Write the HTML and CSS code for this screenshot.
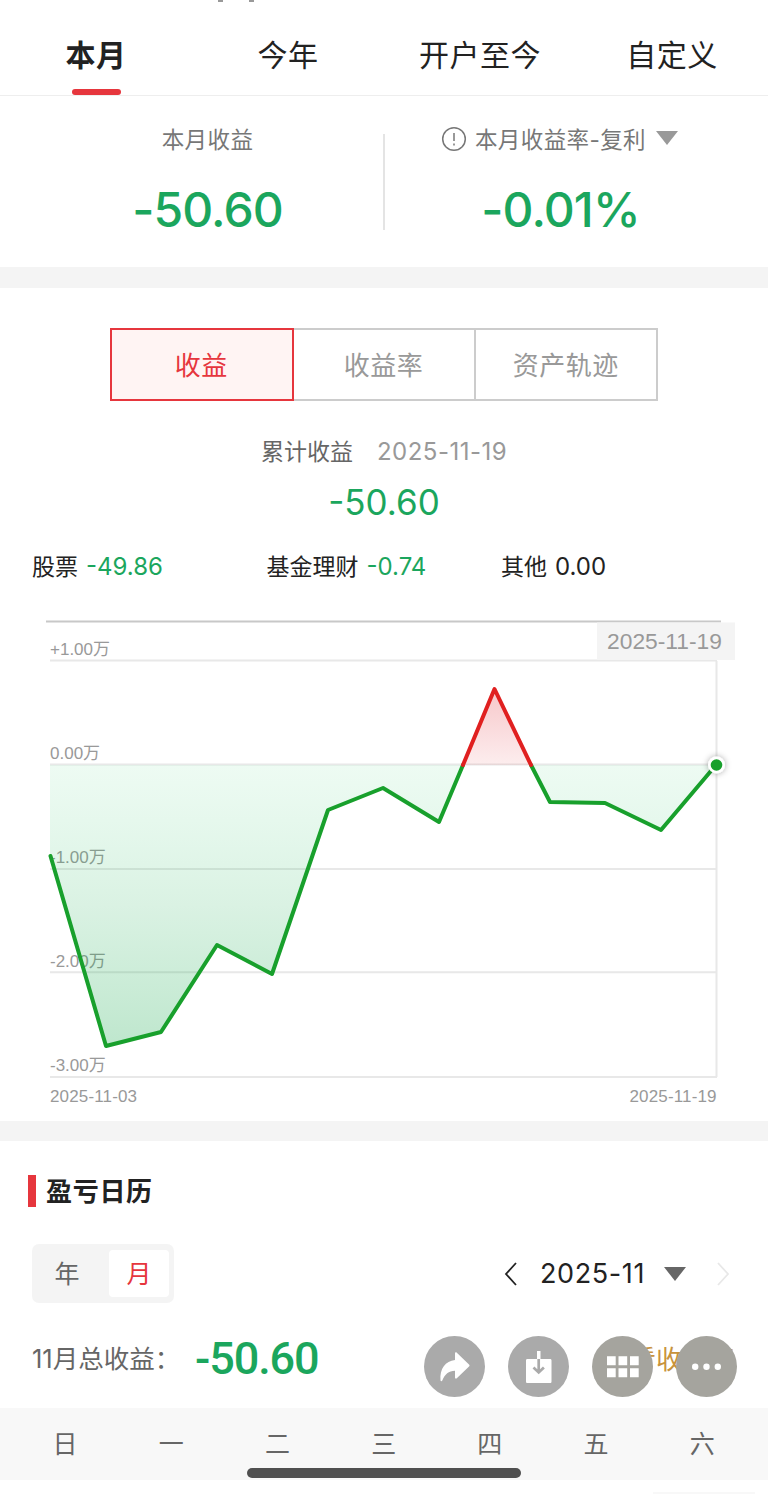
FILE: index.html
```
<!DOCTYPE html>
<html lang="zh-CN">
<head>
    <meta charset="UTF-8">
    <meta name="viewport" content="width=device-width, initial-scale=1.0">
    <title>收益分析</title>
    <link rel="stylesheet" href="styles.css">
</head>
<body>
    <div class="page">
        <div class="top-bar"><i></i><i></i></div>
        <nav class="tabs">
            <a class="tab active">本月</a>
            <a class="tab">今年</a>
            <a class="tab">开户至今</a>
            <a class="tab">自定义</a>
        </nav>

        <section class="summary">
            <div class="summary-item first">
                <div class="summary-label"><span>本月收益</span></div>
                <div class="summary-value">-50.60</div>
            </div>
            <div class="divider"></div>
            <div class="summary-item second">
                <div class="summary-label">
                    <svg class="info" viewBox="0 0 26 26"><circle cx="13" cy="13" r="11.3"/><path d="M13 7v8"/><path d="M13 17.5v2"/></svg>
                    <span>本月收益率-复利</span>
                    <svg class="caret" viewBox="0 0 22 14"><path d="M0 0h22L11 14z"/></svg>
                </div>
                <div class="summary-value">-0.01%</div>
            </div>
        </section>

        <section class="trend">
            <div class="segments">
                <button class="segment active">收益</button>
                <button class="segment">收益率</button>
                <button class="segment">资产轨迹</button>
            </div>
            <div class="total-label"><span>累计收益</span><span class="total-date">2025-11-19</span></div>
            <div class="total-value">-50.60</div>
            <div class="breakdown">
                <div>股票<span class="amount green">-49.86</span></div>
                <div>基金理财<span class="amount green">-0.74</span></div>
                <div>其他<span class="amount">0.00</span></div>
            </div>
            <svg class="chart" viewBox="0 0 768 490" width="768" height="490">
                <defs>
                    <linearGradient id="lossFill" gradientUnits="userSpaceOnUse" x1="0" y1="149" x2="0" y2="430">
                        <stop offset="0" stop-color="#22cc66" stop-opacity="0.08"/>
                        <stop offset="0.5" stop-color="#18ad50" stop-opacity="0.16"/>
                        <stop offset="1" stop-color="#10a547" stop-opacity="0.27"/>
                    </linearGradient>
                    <linearGradient id="gainFill" gradientUnits="userSpaceOnUse" x1="0" y1="73" x2="0" y2="149">
                        <stop offset="0" stop-color="#e0202a" stop-opacity="0.25"/>
                        <stop offset="1" stop-color="#e0202a" stop-opacity="0.08"/>
                    </linearGradient>
                    <filter id="dotShadow" x="-50%" y="-50%" width="200%" height="200%">
                        <feDropShadow dx="0" dy="0" stdDeviation="3" flood-opacity="0.35"/>
                    </filter>
                </defs>
                <path class="top-line" d="M46 5.500H721"/>
                <path class="grid" d="M50 44.500H717M50 148.500H717M50 253H717M50 356.200H717M50 461H717M716.500 45V461"/>
                <g class="axis">
                    <text x="50" y="39">+1.00万</text>
                    <text x="50" y="143">0.00万</text>
                    <text x="50" y="247">-1.00万</text>
                    <text x="50" y="351">-2.00万</text>
                    <text x="50" y="455">-3.00万</text>
                    <text x="50" y="486" textLength="87">2025-11-03</text>
                    <text x="629.500" y="486" textLength="87">2025-11-19</text>
                </g>
                <path fill="url(#lossFill)" d="M50 149V240L106 430L161 416L217 329L272 358L328 194L383 172L439 206L463 149zM531 149L550 186L605 187L661 214L716 149z"/>
                <path fill="url(#gainFill)" d="M463 149L494.500 73L531 149z"/>
                <path class="line" d="M50.500 240L106 430L161 416L217 329L272 358L328 194L383 172L439 206L463 149"/>
                <path class="line" d="M531 149L550 186L605 187L661 214L716 149"/>
                <path class="line gain" d="M463 149L494.500 73L531 149"/>
                <circle cx="716.500" cy="149" r="8.500" fill="#fff" filter="url(#dotShadow)"/>
                <circle cx="716.500" cy="149" r="5.800" fill="#18a02c"/>
                <rect x="597" y="6.500" width="138" height="37.500" fill="#f4f4f4"/>
                <text class="marker-text" x="664.500" y="33" text-anchor="middle">2025-11-19</text>
            </svg>
        </section>

        <section class="calendar">
            <h2>盈亏日历</h2>
            <div class="calendar-bar">
                <div class="switch">
                    <span>年</span>
                    <span class="active">月</span>
                </div>
                <div class="month">
                    <svg class="arrow" viewBox="0 0 14 24"><path d="M12 1L2 12L12 23"/></svg>
                    <span>2025-11</span>
                    <svg class="caret dark" viewBox="0 0 22 14"><path d="M0 0h22L11 14z"/></svg>
                    <svg class="arrow disabled" viewBox="0 0 14 24"><path d="M2 1L12 12L2 23"/></svg>
                </div>
            </div>
            <div class="month-total">
                <span class="month-label">11月总收益：</span>
                <span class="month-value">-50.60</span>
                <a class="link">查看收益率</a>
            </div>
            <div class="week">
                <span>日</span><span>一</span><span>二</span><span>三</span><span>四</span><span>五</span><span>六</span>
            </div>
            <div class="day-cell"></div>
        </section>

        <div class="actions">
            <svg viewBox="0 0 61 61"><circle cx="30.500" cy="30.500" r="30.500" fill="#aaa"/><path d="M31 17.500c0-1 1-1.600 1.800-.8L45 28.500c.7.700.7 1.300 0 2L32.800 42.300c-.8.800-1.800.3-1.800-.8v-6.700c-6.500 0-10 3.500-12.700 9.700-.5 1-1.700 1-1.800-.2C15.500 33 21.500 24.800 31 24z" fill="#fff"/></svg>
            <svg viewBox="0 0 61 61"><circle cx="30.500" cy="30.500" r="30.500" fill="#aaa"/><path d="M29 15h3.500v8H42c1 0 1.500.5 1.500 1.500v21c0 1-.5 1.500-1.500 1.500H19.500c-1 0-1.500-.5-1.500-1.500v-21c0-1 .5-1.500 1.500-1.500H29z" fill="#fff"/><path d="M30.700 23v13M25.500 31.500l5.200 5 5.200-5" fill="none" stroke="#aaa" stroke-width="2.700"/></svg>
            <svg viewBox="0 0 61 61"><circle cx="30.500" cy="30.500" r="30.500" fill="#a5a49e"/><path d="M15 20.300h8.700v9H15zM26.500 20.300h8.700v9h-8.700zM38 20.300h8.700v9H38zM15 32.300h8.700v9H15zM26.500 32.300h8.700v9h-8.700zM38 32.300h8.700v9H38z" fill="#fff"/></svg>
            <svg viewBox="0 0 61 61"><circle cx="30.500" cy="30.500" r="30.500" fill="#a5a49e"/><g fill="#fff"><circle cx="19.200" cy="30.700" r="3.200"/><circle cx="30.500" cy="30.700" r="3.200"/><circle cx="41.800" cy="30.700" r="3.200"/></g></svg>
        </div>
        <div class="home-bar"></div>
    </div>
</body>
</html>
```
FILE: styles.css
```
* {
    box-sizing: border-box;
}
body {
    margin: 0;
    background: #fff;
    color: #222;
    font-family: Inter, "Noto Sans CJK SC", sans-serif;
}
.page {
    position: relative;
    width: 768px;
    height: 1494px;
    overflow: hidden;
}
.top-bar {
    display: flex;
    gap: 26px;
    height: 15px;
    padding-left: 218px;
}
.top-bar i {
    width: 5px;
    height: 2px;
    background: #999;
}
.tabs {
    display: grid;
    grid-template-columns: repeat(4, 1fr);
    height: 81px;
    border-bottom: 1px solid #eee;
}
.tab {
    position: relative;
    text-align: center;
    font-size: 30px;
    line-height: 80px;
    letter-spacing: 0.5px;
}
.tab.active {
    font-weight: bold;
}
.tab.active::after {
    content: "";
    position: absolute;
    left: 72px;
    bottom: 0;
    width: 49px;
    height: 6px;
    border-radius: 3px;
    background: #e6363d;
}
.summary {
    display: flex;
    height: 192px;
    padding-top: 25px;
    border-bottom: 21px solid #f4f4f4;
}
.summary-item {
    flex: 1;
    text-align: center;
}
.first {
    padding-left: 32px;
}
.second {
    padding-right: 32px;
}
.divider {
    width: 2px;
    height: 96px;
    margin-top: 13px;
    background: #e4e4e4;
}
.summary-label {
    display: flex;
    justify-content: center;
    align-items: center;
    height: 34px;
    color: #777;
    font-size: 22.5px;
    letter-spacing: 0.4px;
}
.info {
    width: 26px;
    height: 26px;
    margin: 2px 8px 0 -2px;
    fill: none;
    stroke: #777;
    stroke-width: 1.5;
}
.caret {
    width: 22px;
    height: 14px;
    margin-left: 10px;
    fill: #999;
}
.summary-value {
    margin-top: 25px;
    color: #1ba65d;
    font-size: 48px;
    font-weight: 500;
    line-height: 60px;
    letter-spacing: -0.9px;
}
.trend {
    height: 853px;
    padding-top: 40px;
    border-bottom: 20px solid #f4f4f4;
}
.segments {
    display: flex;
    width: 549px;
    height: 73px;
    margin-left: 109.500px;
}
.segment {
    flex: 1;
    margin-left: -2px;
    padding: 0 1px 3px 0;
    border: 2px solid #ccc;
    background: #fff;
    color: #999;
    font-family: inherit;
    font-size: 26px;
    letter-spacing: 0.5px;
}
.segment.active {
    z-index: 1;
    margin-left: 0;
    border-color: #e6363d;
    background: #fff4f3;
    color: #e6363d;
}
.total-label {
    display: flex;
    justify-content: center;
    gap: 24px;
    margin-top: 33px;
    color: #666;
    font-size: 23px;
    line-height: 36px;
}
.total-date {
    color: #999;
    font-size: 24px;
    letter-spacing: 0.5px;
}
.total-value {
    margin-top: 7px;
    color: #1ba65d;
    font-size: 35px;
    line-height: 50px;
    text-align: center;
}
.breakdown {
    display: grid;
    grid-template-columns: 234.500px 234.500px 1fr;
    margin-top: 22px;
    padding-left: 32px;
    font-size: 23px;
    line-height: 36px;
}
.amount {
    margin-left: 8px;
    font-size: 24px;
}
.green {
    color: #1ba65d;
}
.chart {
    display: block;
    margin-top: 31px;
}
.grid {
    fill: none;
    stroke: #e8e8e8;
    stroke-width: 2;
}
.top-line {
    stroke: #c8c8c8;
    stroke-width: 2;
}
.axis {
    fill: #999;
    font-family: "Liberation Sans", "Noto Sans CJK SC", sans-serif;
    font-size: 17px;
}
.line {
    fill: none;
    stroke: #18a02c;
    stroke-width: 4;
    stroke-linejoin: round;
    stroke-linecap: round;
}
.line.gain {
    stroke: #e02020;
}
.marker-text {
    fill: #999;
    font-family: "Liberation Sans", sans-serif;
    font-size: 22.800px;
}
.calendar h2 {
    display: flex;
    align-items: center;
    height: 32px;
    margin: 34px 0 0 28px;
    padding: 0 0 3px 10px;
    border-left: 8px solid #e6363d;
    font-size: 26px;
    letter-spacing: 0.7px;
}
.calendar-bar {
    display: flex;
    justify-content: space-between;
    align-items: center;
    margin-top: 37px;
    padding: 0 38px 0 32px;
}
.switch {
    display: flex;
    gap: 12px;
    width: 142px;
    height: 59px;
    padding: 6px 5px;
    border-radius: 7px;
    background: #f4f4f4;
    color: #666;
    font-size: 25px;
    line-height: 48px;
    text-align: center;
}
.switch span {
    flex: 1;
}
.switch .active {
    flex: 0 0 60px;
    border-radius: 4px;
    background: #fff;
    color: #e6363d;
}
.month {
    display: flex;
    align-items: center;
    font-size: 27px;
    letter-spacing: 0.6px;
}
.arrow {
    width: 14px;
    height: 24px;
    margin-right: 22px;
    fill: none;
    stroke: #222;
    stroke-width: 1.800;
}
.arrow.disabled {
    margin: 0 0 0 30px;
    stroke: #e8e8e8;
}
.caret.dark {
    margin-left: 19px;
    fill: #666;
}
.month-total {
    display: flex;
    align-items: center;
    height: 105px;
    padding: 0 34px 0 32px;
}
.month-label {
    width: 163px;
    padding-top: 1px;
    color: #666;
    font-size: 25.500px;
    white-space: nowrap;
}
.month-value {
    padding-top: 5px;
    color: #1ba65d;
    font-family: Roboto, sans-serif;
    font-size: 45px;
    font-weight: 500;
    letter-spacing: -1.100px;
}
.link {
    margin-left: auto;
    padding-top: 3px;
    color: #c8933c;
    font-size: 26px;
}
.week {
    display: grid;
    grid-template-columns: repeat(7, 106.200px);
    height: 72px;
    padding-left: 12px;
    background: #f8f8f8;
    color: #666;
    font-size: 25px;
    line-height: 73px;
    text-align: center;
}
.day-cell {
    width: 102px;
    height: 2px;
    margin: 12px 0 0 653px;
    background: #f8f8f8;
}
/* floating buttons over the page */
.actions {
    position: absolute;
    left: 424px;
    top: 1336px;
    display: flex;
    gap: 23px;
}
.actions svg {
    width: 61px;
    height: 61px;
}
.home-bar {
    position: absolute;
    left: 247px;
    top: 1468px;
    width: 274px;
    height: 10px;
    border-radius: 5px;
    background: #505050;
}
```
